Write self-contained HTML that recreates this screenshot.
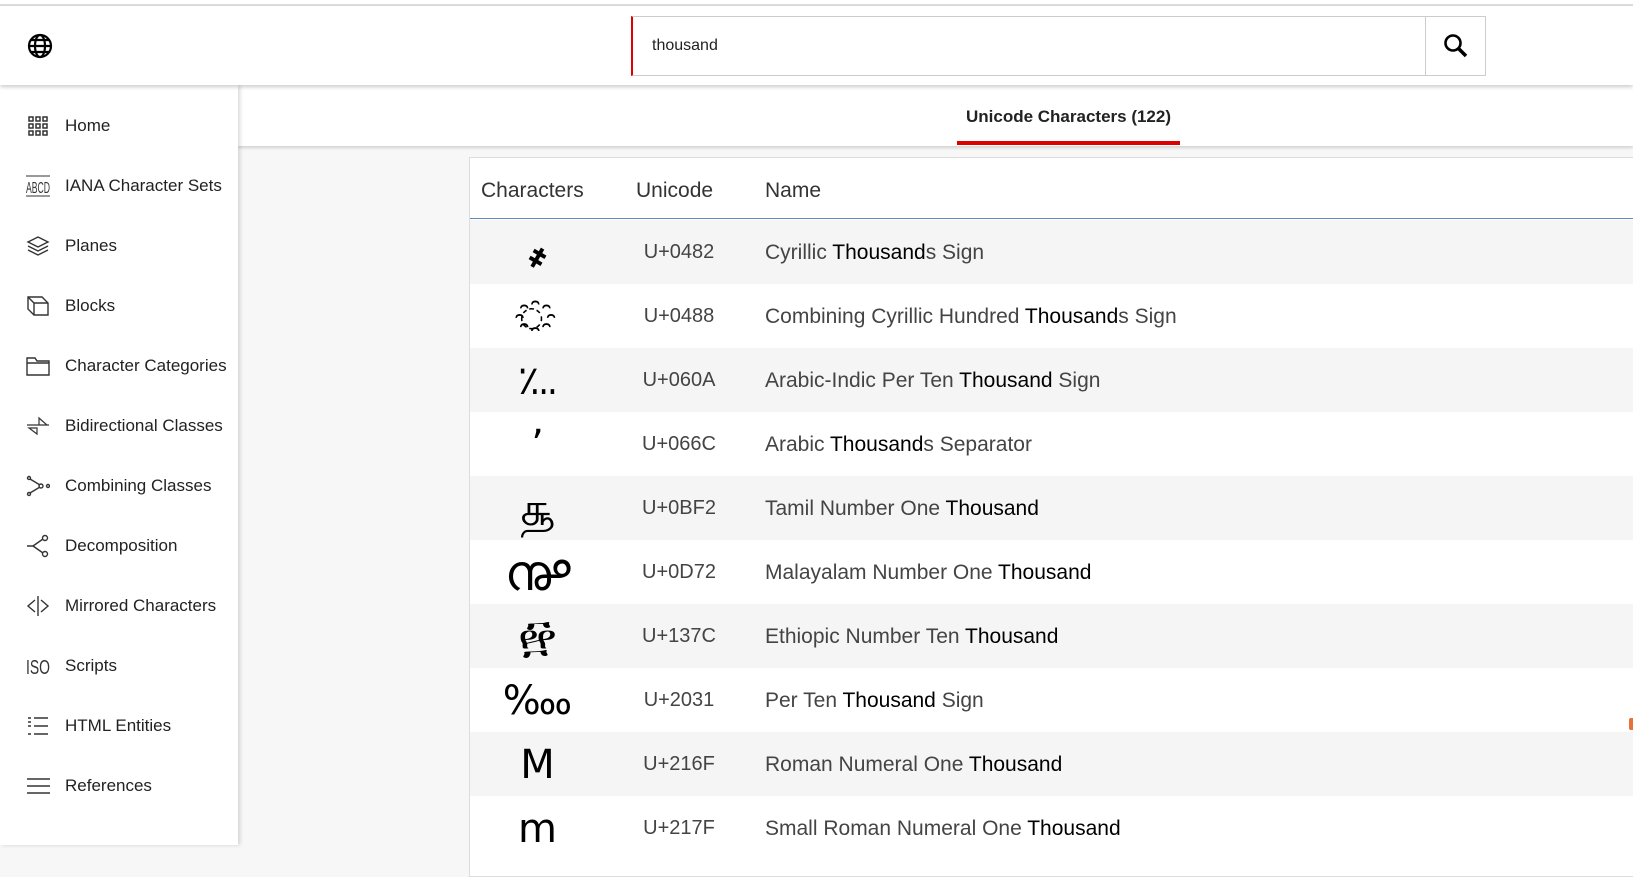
<!DOCTYPE html>
<html><head><meta charset="utf-8"><style>
*{margin:0;padding:0;box-sizing:border-box}
body{width:1633px;height:842px;overflow:hidden;background:#f7f7f7;font-family:"Liberation Sans",sans-serif;position:relative;color:#222}
.topline{position:absolute;left:0;top:0;width:1633px;height:6px;background:#fff;border-bottom:2px solid #ddd}
.header{position:absolute;left:0;top:6px;width:1633px;height:79px;background:#fff;box-shadow:0 2px 4px rgba(0,0,0,.2);z-index:3}
.search{position:absolute;left:631px;top:10px;width:855px;height:60px;border:1px solid #ccc;border-left:2px solid #d00}
.search span{position:absolute;left:19px;top:20px;font-size:16px;color:#222}
.search .btn{position:absolute;right:0;top:0;width:60px;height:58px;border-left:1px solid #ccc}
.side{position:absolute;left:0;top:85px;width:238px;height:760px;background:#fff;box-shadow:2px 0 4px rgba(0,0,0,.15);z-index:2}
.item{position:absolute;left:26px;height:24px;display:flex;align-items:center;font-size:17px;color:#222}
.item svg{width:24px;height:24px;margin-right:15px}
.tabbar{position:absolute;left:238px;top:85px;width:1395px;height:61px;background:#fff;box-shadow:0 2px 3px rgba(0,0,0,.15);z-index:1}
.tab{position:absolute;left:719px;top:22px;width:223px;text-align:center;font-weight:bold;font-size:17px;color:#222}
.ul{position:absolute;left:719px;top:56px;width:223px;height:4px;background:#d00}
.table{position:absolute;left:469px;top:157px;width:1170px;height:720px;background:#fff;border:1px solid #ddd}
.th{position:absolute;top:0;height:61px;width:100%;border-bottom:1px solid #5d8fbf}
.th span{position:absolute;top:21px;font-size:21px;color:#333}
.row{position:absolute;left:0;width:100%;height:64px}
.row.g{background:#f5f5f5}
.row .c{position:absolute;left:0;width:135px;text-align:center;top:8px;font-size:40px;color:#000;line-height:50px;font-family:"DejaVu Sans",sans-serif}
.row .u{position:absolute;left:150px;width:118px;text-align:center;top:21px;font-size:20px;color:#444}
.row .n{position:absolute;left:295px;top:21px;font-size:21px;color:#444;white-space:nowrap}
.row .n b{font-weight:normal;color:#000}
</style></head><body>
<div class="topline"></div>
<div class="header">
<svg style="position:absolute;left:27px;top:27px" width="26" height="26" viewBox="0 0 26 26" fill="none" stroke="#000" stroke-width="2.2"><circle cx="13" cy="13" r="11"/><ellipse cx="13" cy="13" rx="5" ry="11"/><line x1="2" y1="13" x2="24" y2="13"/><line x1="4" y1="7" x2="22" y2="7"/><line x1="4" y1="19" x2="22" y2="19"/></svg>
<div class="search"><span>thousand</span><div class="btn"><svg style="position:absolute;left:17px;top:16px" width="26" height="26" viewBox="0 0 26 26" fill="none" stroke="#000" stroke-width="2.6"><circle cx="10" cy="10" r="7.5"/><line x1="15.5" y1="15.5" x2="23" y2="23" stroke-width="3.5"/></svg></div></div>
</div>
<div class="side">
<div class="item" style="top:29px"><svg viewBox="0 0 24 24" fill="none" stroke="#333" stroke-width="1.5"><rect x="3" y="3" width="4" height="4"/><rect x="10" y="3" width="4" height="4"/><rect x="17" y="3" width="4" height="4"/><rect x="3" y="10" width="4" height="4"/><rect x="10" y="10" width="4" height="4"/><rect x="17" y="10" width="4" height="4"/><rect x="3" y="17" width="4" height="4"/><rect x="10" y="17" width="4" height="4"/><rect x="17" y="17" width="4" height="4"/></svg>Home</div>
<div class="item" style="top:89px"><svg viewBox="0 0 24 24"><line x1="0" y1="2" x2="24" y2="2" stroke="#333"/><line x1="0" y1="22" x2="24" y2="22" stroke="#333"/><text x="0" y="19" font-size="16" fill="#333" textLength="24" lengthAdjust="spacingAndGlyphs">ABCD</text></svg>IANA Character Sets</div>
<div class="item" style="top:149px"><svg viewBox="0 0 24 24" fill="none" stroke="#333" stroke-width="1.4"><path d="M12 3L22 8 12 13 2 8Z"/><path d="M2 12l10 5 10-5"/><path d="M2 16l10 5 10-5"/></svg>Planes</div>
<div class="item" style="top:209px"><svg viewBox="0 0 24 24" fill="none" stroke="#333" stroke-width="1.4"><path d="M2 3h14l6 6v12H8L2 15Z"/><path d="M2 3l6 6h14M8 9v12"/></svg>Blocks</div>
<div class="item" style="top:269px"><svg viewBox="0 0 24 24" fill="none" stroke="#333" stroke-width="1.4"><path d="M1 4h8l2 3h12v14H1Z"/><path d="M1 9h22"/></svg>Character Categories</div>
<div class="item" style="top:329px"><svg viewBox="0 0 24 24" fill="none" stroke="#333" stroke-width="1.2"><path d="M1 11h22M13 4v7l8 0ZM11 20v-6L3 14Z"/></svg>Bidirectional Classes</div>
<div class="item" style="top:389px"><svg viewBox="0 0 24 24" fill="none" stroke="#333" stroke-width="1.4"><circle cx="3" cy="4" r="1.5"/><circle cx="3" cy="20" r="1.5"/><circle cx="15" cy="12" r="2"/><circle cx="22" cy="12" r="1.5"/><path d="M4 5l10 6M4 19l10-6"/></svg>Combining Classes</div>
<div class="item" style="top:449px"><svg viewBox="0 0 24 24" fill="none" stroke="#333" stroke-width="1.4"><circle cx="19" cy="4" r="2.5"/><circle cx="19" cy="20" r="2.5"/><path d="M1 12h6l10-7M7 12l10 7"/></svg>Decomposition</div>
<div class="item" style="top:509px"><svg viewBox="0 0 24 24" fill="none" stroke="#333" stroke-width="1.4"><path d="M12 2v20M9 6L2 12l7 6M15 6l7 6-7 6"/></svg>Mirrored Characters</div>
<div class="item" style="top:569px"><svg viewBox="0 0 24 24"><text x="0" y="20" font-size="20" fill="#333" textLength="24" lengthAdjust="spacingAndGlyphs">ISO</text></svg>Scripts</div>
<div class="item" style="top:629px"><svg viewBox="0 0 24 24" fill="none" stroke="#333" stroke-width="1.5"><path d="M2 4h3M2 12h3M2 20h3M8 4h14M8 12h14M8 20h14M2 8h3"/></svg>HTML Entities</div>
<div class="item" style="top:689px"><svg viewBox="0 0 24 24" fill="none" stroke="#333" stroke-width="1.5"><path d="M1 5h23M1 12h23M1 19h23"/></svg>References</div>
</div>
<div class="tabbar"><div class="tab">Unicode Characters (122)</div><div class="ul"></div></div>
<div class="table">
<div class="th"><span style="left:11px">Characters</span><span style="left:166px">Unicode</span><span style="left:295px">Name</span></div>
<div class="row g" style="top:62px"><div class="c">҂</div><div class="u">U+0482</div><div class="n">Cyrillic <b>Thousand</b>s Sign</div></div>
<div class="row" style="top:126px"><div class="c" style="font-size:28px">&#x25CC;&#x0488;</div><div class="u">U+0488</div><div class="n">Combining Cyrillic Hundred <b>Thousand</b>s Sign</div></div>
<div class="row g" style="top:190px"><div class="c">؊</div><div class="u">U+060A</div><div class="n">Arabic-Indic Per Ten <b>Thousand</b> Sign</div></div>
<div class="row" style="top:254px"><div class="c">٬</div><div class="u">U+066C</div><div class="n">Arabic <b>Thousand</b>s Separator</div></div>
<div class="row g" style="top:318px"><div class="c" style="font-size:46px">௲</div><div class="u">U+0BF2</div><div class="n">Tamil Number One <b>Thousand</b></div></div>
<div class="row" style="top:382px"><div class="c" style="font-size:50px">൲</div><div class="u">U+0D72</div><div class="n">Malayalam Number One <b>Thousand</b></div></div>
<div class="row g" style="top:446px"><div class="c" style="font-size:44px">፼</div><div class="u">U+137C</div><div class="n">Ethiopic Number Ten <b>Thousand</b></div></div>
<div class="row" style="top:510px"><div class="c">‱</div><div class="u">U+2031</div><div class="n">Per Ten <b>Thousand</b> Sign</div></div>
<div class="row g" style="top:574px"><div class="c">Ⅿ</div><div class="u">U+216F</div><div class="n">Roman Numeral One <b>Thousand</b></div></div>
<div class="row" style="top:638px"><div class="c">ⅿ</div><div class="u">U+217F</div><div class="n">Small Roman Numeral One <b>Thousand</b></div></div>
</div>
<div style="position:absolute;left:1629px;top:718px;width:4px;height:12px;background:#e8703a;border-radius:2px 0 0 2px"></div>
</body></html>
